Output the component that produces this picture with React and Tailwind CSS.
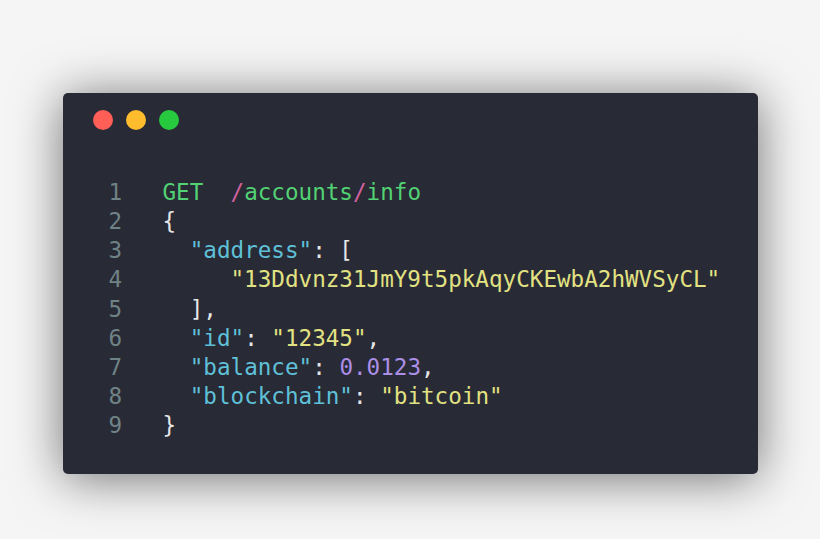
import React from "react";

const G = "text-[#52d273]";
const P = "text-[#d2619e]";
const C = "text-[#5fc0d8]";
const Y = "text-[#e2e282]";
const V = "text-[#ab8ee6]";
const W = "text-[#e6e6e6]";

const lines = [
  [[G, "GET"], [W, "  "], [P, "/"], [G, "accounts"], [P, "/"], [G, "info"]],
  [[W, "{"]],
  [[W, "  "], [C, '"address"'], [W, ": ["]],
  [[W, "     "], [Y, '"13Ddvnz31JmY9t5pkAqyCKEwbA2hWVSyCL"']],
  [[W, "  ],"]],
  [[W, "  "], [C, '"id"'], [W, ": "], [Y, '"12345"'], [W, ","]],
  [[W, "  "], [C, '"balance"'], [W, ": "], [V, "0.0123"], [W, ","]],
  [[W, "  "], [C, '"blockchain"'], [W, ": "], [Y, '"bitcoin"']],
  [[W, "}"]],
];

export default function App() {
  return (
    <div className="w-[820px] h-[539px] bg-[#f5f5f5] flex justify-center pt-[93px] overflow-hidden">
      <div className="w-[695px] h-[381px] bg-[#282a36] rounded-[5px] shadow-[0_4px_50px_rgba(0,0,0,0.55)] flex flex-col">
        <div className="flex gap-[13px] pl-[30px] pt-[17px]">
          <span className="w-[20px] h-[20px] rounded-full bg-[#ff5f56]" />
          <span className="w-[20px] h-[20px] rounded-full bg-[#ffbd2e]" />
          <span className="w-[20px] h-[20px] rounded-full bg-[#27c93f]" />
        </div>
        <div
          className="mt-[48px] pl-[46px] text-[22.6px] leading-[29.15px] whitespace-pre"
          style={{ fontFamily: '"DejaVu Sans Mono", monospace' }}
        >
          {lines.map((segs, i) => (
            <div key={i} className="flex">
              <span className="w-[54px] text-[#6f8285]">{i + 1}</span>
              <span>
                {segs.map(([cls, t], j) => (
                  <span key={j} className={cls}>
                    {t}
                  </span>
                ))}
              </span>
            </div>
          ))}
        </div>
      </div>
    </div>
  );
}
